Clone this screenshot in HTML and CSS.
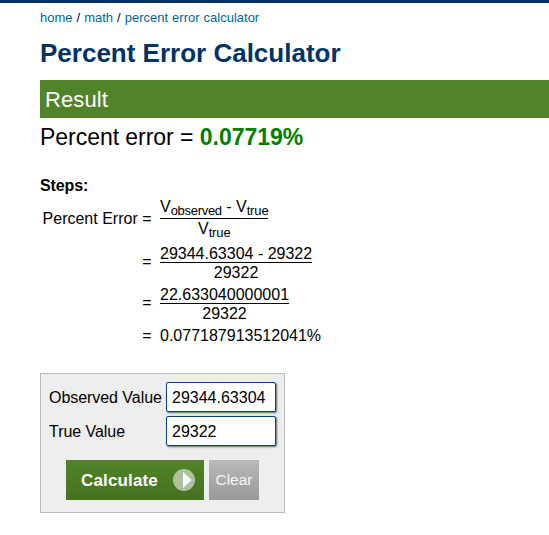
FILE: index.html
```html
<!DOCTYPE html>
<html lang="en">
<head>
<meta charset="utf-8">
<title>Percent Error Calculator</title>
<link rel="stylesheet" href="styles.css">
</head>
<body>
<header class="topbar"></header>
<main class="content">
  <nav class="crumbs"><a>home</a> / <a>math</a> / <a>percent error calculator</a></nav>
  <h1>Percent Error Calculator</h1>
  <h2>Result</h2>
  <p class="answer">Percent error = <b>0.07719%</b></p>
  <h3>Steps:</h3>
  <div class="steps">
    <div class="step symbolic">
      <span class="lhs">Percent Error =</span>
      <span class="fraction"><span class="num">V<small class="observed">observed</small> - V<small>true</small></span><span class="den">V<small>true</small></span></span>
    </div>
    <div class="step second">
      <span class="lhs">=</span>
      <span class="fraction"><span class="num">29344.63304 - 29322</span><span class="den">29322</span></span>
    </div>
    <div class="step third">
      <span class="lhs">=</span>
      <span class="fraction"><span class="num">22.633040000001</span><span class="den">29322</span></span>
    </div>
    <div class="step last">
      <span class="lhs">=</span>
      <span class="value">0.077187913512041%</span>
    </div>
  </div>
  <form class="panel">
    <label class="field"><span>Observed Value</span><input type="text" value="29344.63304"></label>
    <label class="field"><span>True Value</span><input type="text" value="29322"></label>
    <div class="actions">
      <button class="calculate" type="button"><span>Calculate</span><svg width="22" height="22" viewBox="0 0 22 22"><circle cx="11" cy="11" r="11" fill="#adc29c"/><path d="M10 3L18.5 11L10 19Z" fill="#fff"/></svg></button>
      <button class="clear" type="button">Clear</button>
    </div>
  </form>
</main>
</body>
</html>
```

FILE: styles.css
```css
* { box-sizing: border-box; }
body {
  margin: 0;
  background: #fff;
  color: #000;
  font: 16px/18px "Liberation Sans", Arial, sans-serif;
  overflow: hidden;
}
.topbar { height: 3px; background: #003366; }
.content { padding-left: 40px; white-space: nowrap; }
.crumbs { padding-top: 7px; font-size: 13px; line-height: 15px; word-spacing: 0.4px; }
.crumbs a { color: #006699; }
h1 { margin: 13px 0 0; font-size: 26px; line-height: 30px; color: #003366; }
h2 {
  margin: 12px 0 0;
  height: 38px;
  padding-left: 5px;
  background: #518428;
  color: #fff;
  font-size: 22px;
  font-weight: 400;
  line-height: 40px;
  letter-spacing: 0.1px;
}
.answer { margin: 5px 0 0; font-size: 23px; line-height: 28px; letter-spacing: -0.04px; }
.answer b { color: #008000; }
h3 { margin: 26px 0 0; font-size: 16px; line-height: 18px; letter-spacing: -0.1px; }
.steps { padding-top: 2px; }
.step { display: flex; align-items: center; gap: 8.5px; height: 40px; }
.symbolic { height: 44px; }
.second { height: 42px; }
.last { height: 25px; }
.lhs { width: 111.5px; text-align: right; }
.fraction { display: flex; flex-direction: column; text-align: center; }
.num { height: 19px; border-bottom: 1px solid #000; line-height: 20px; }
.den { height: 18px; line-height: 19px; }
.symbolic .num, .symbolic .den { height: 22px; line-height: 20px; }
small { font-size: 13px; line-height: 0; position: relative; top: 3px; letter-spacing: -0.15px; }
.observed { letter-spacing: -0.3px; }
.panel {
  width: 245px;
  height: 140px;
  margin: 25px 0 0;
  padding: 8px;
  border: 1px solid #bbb;
  background: #eee;
}
.field { display: flex; align-items: center; justify-content: space-between; height: 30px; margin-bottom: 4px; }
.field span { padding-top: 2px; letter-spacing: -0.05px; }
.field input {
  width: 110px;
  height: 30px;
  padding: 2px 5px 0;
  border: 1px solid #044284;
  border-radius: 2px;
  box-shadow: 1px 1px 2px #666;
  background: #fff;
  color: #000;
  font: 16px "Liberation Sans", Arial, sans-serif;
}
.actions { display: flex; gap: 5px; padding: 10px 0 0 17px; }
button { height: 40px; margin: 0; border: 0; color: #fff; font: 16px "Liberation Sans", Arial, sans-serif; }
.calculate {
  display: flex;
  align-items: center;
  justify-content: space-between;
  width: 138px;
  padding: 0 9px 0 15px;
  background: linear-gradient(#518428, #46711f);
  font-size: 17px;
  font-weight: 700;
  letter-spacing: 0.15px;
}
.calculate span { padding-top: 1px; }
.clear { width: 50px; padding: 0; background: linear-gradient(#b9b9b9, #999); color: #f5f5f5; font-size: 15.5px; }
```
